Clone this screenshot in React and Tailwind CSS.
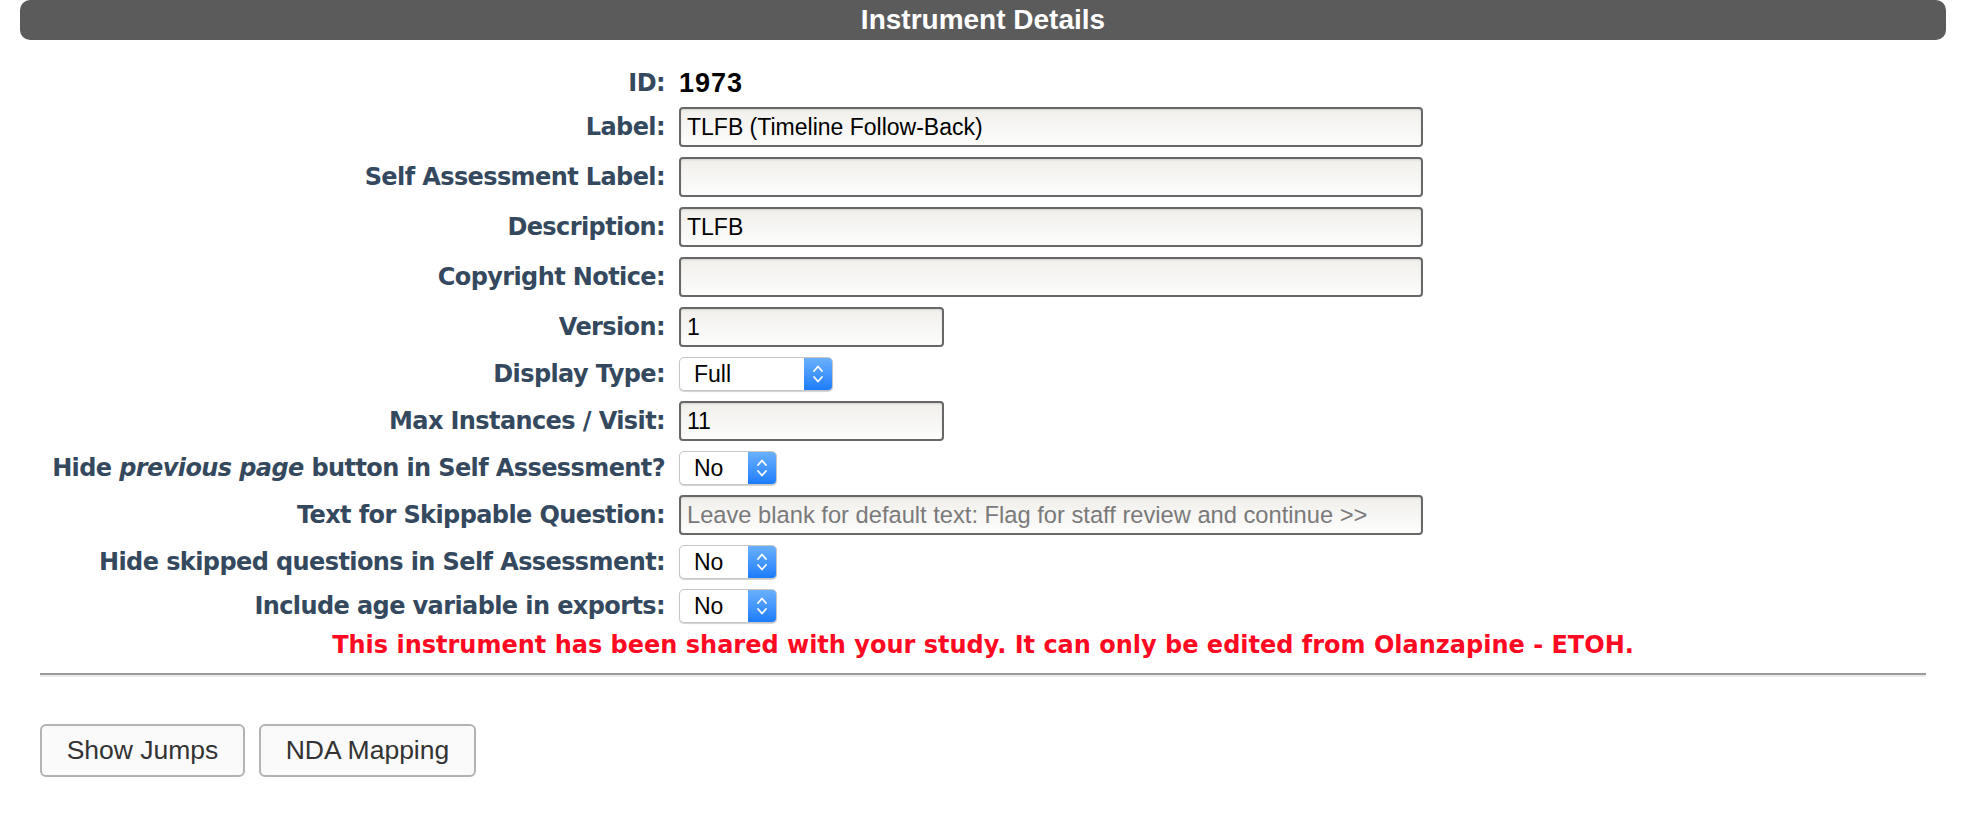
import React from "react";

const labelCls =
  "text-right font-['DejaVu_Sans',Verdana,sans-serif] font-bold text-[24px] tracking-[-0.6px] leading-[28px] text-[#34495e] whitespace-nowrap";

function TextInput({ value, placeholder, wide = true }) {
  return (
    <input
      readOnly
      defaultValue={value}
      placeholder={placeholder}
      className={`${wide ? "w-[744px]" : "w-[265px]"} h-[40px] rounded-[4px] border-2 border-[#686868] bg-linear-to-b from-[#f0efeb] to-[#fdfdfc] px-[6px] font-['Liberation_Sans',Arial,sans-serif] text-[23px] text-black placeholder:text-[23.7px] placeholder:text-[#7a7a7a] shadow-[inset_0_1px_2px_rgba(0,0,0,0.12)] outline-none`}
    />
  );
}

function Chevrons() {
  return (
    <svg width="12" height="22" viewBox="0 0 12 22" fill="none">
      <path d="M2 8 L6 3.5 L10 8" stroke="white" strokeWidth="1.8" strokeLinecap="round" strokeLinejoin="round" />
      <path d="M2 14 L6 18.5 L10 14" stroke="white" strokeWidth="1.8" strokeLinecap="round" strokeLinejoin="round" />
    </svg>
  );
}

function MacSelect({ value, wide = false }) {
  return (
    <div
      className={`${wide ? "w-[154px]" : "w-[98px]"} flex h-[34px] items-stretch overflow-hidden rounded-[5px] border border-[#c6c6c6] bg-white shadow-[0_1px_1px_rgba(0,0,0,0.18)]`}
    >
      <div className="flex flex-1 items-center pl-[14px] font-['Liberation_Sans',Arial,sans-serif] text-[23px] text-black">
        {value}
      </div>
      <div className="flex w-[28px] items-center justify-center bg-linear-to-b from-[#69b0fd] to-[#1a7cfa]">
        <Chevrons />
      </div>
    </div>
  );
}

function Row({ label, children, height = "h-[40px]" }) {
  return (
    <>
      <div className={labelCls}>{label}</div>
      <div className={`flex ${height} items-center`}>{children}</div>
    </>
  );
}

export default function App() {
  return (
    <div className="min-h-screen bg-white">
      <div className="ml-[20px] w-[1926px]">
        <div className="flex h-[40px] items-center justify-center rounded-[10px] bg-[#5b5b5b] font-['Liberation_Sans',Arial,sans-serif] text-[28px] font-bold text-white">
          Instrument Details
        </div>

        <div className="mt-[29px] grid grid-cols-[645px_1fr] items-center gap-x-[14px] gap-y-[10px]">
          <Row label="ID:" height="h-[28px]">
            <span className="font-['Liberation_Sans',Arial,sans-serif] text-[27px] font-bold tracking-[1px] text-black">
              1973
            </span>
          </Row>
          <Row label="Label:">
            <TextInput value="TLFB (Timeline Follow-Back)" />
          </Row>
          <Row label="Self Assessment Label:">
            <TextInput value="" />
          </Row>
          <Row label="Description:">
            <TextInput value="TLFB" />
          </Row>
          <Row label="Copyright Notice:">
            <TextInput value="" />
          </Row>
          <Row label="Version:">
            <TextInput value="1" wide={false} />
          </Row>
          <Row label="Display Type:" height="h-[34px]">
            <MacSelect value="Full" wide />
          </Row>
          <Row label="Max Instances / Visit:">
            <TextInput value="11" wide={false} />
          </Row>
          <Row
            label={
              <>
                Hide <i>previous page</i> button in Self Assessment?
              </>
            }
            height="h-[34px]"
          >
            <MacSelect value="No" />
          </Row>
          <Row label="Text for Skippable Question:">
            <TextInput
              value=""
              placeholder="Leave blank for default text: Flag for staff review and continue >>"
            />
          </Row>
          <Row label="Hide skipped questions in Self Assessment:" height="h-[34px]">
            <MacSelect value="No" />
          </Row>
          <Row label="Include age variable in exports:" height="h-[34px]">
            <MacSelect value="No" />
          </Row>
        </div>

        <p className="mt-[8px] text-center font-['DejaVu_Sans',Verdana,sans-serif] text-[24px] font-bold leading-[28px] text-[#ff0a22]">
          This instrument has been shared with your study. It can only be edited from Olanzapine - ETOH.
        </p>

        <div className="mx-[20px] mt-[14px] border-t-2 border-b-2 border-t-[#9b9b9b] border-b-[#ececec]" />

        <div className="ml-[20px] mt-[47px] flex gap-[14px]">
          <button className="h-[53px] w-[205px] rounded-[6px] border-2 border-[#b3b3b3] bg-[#fafafa] font-['Liberation_Sans',Arial,sans-serif] text-[26.5px] text-[#333]">
            Show Jumps
          </button>
          <button className="h-[53px] w-[217px] rounded-[6px] border-2 border-[#b3b3b3] bg-[#fafafa] font-['Liberation_Sans',Arial,sans-serif] text-[26.5px] text-[#333]">
            NDA Mapping
          </button>
        </div>
      </div>
    </div>
  );
}
